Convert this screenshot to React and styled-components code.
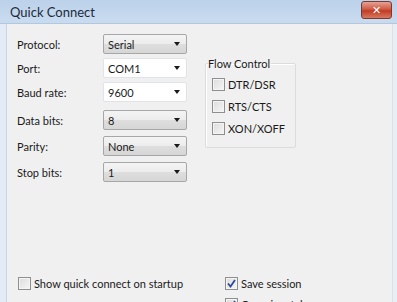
import React from 'react'
import styled, { createGlobalStyle } from 'styled-components'

const Global = createGlobalStyle`
  html, body { margin: 0; padding: 0; background: #f0f0f0; }
  body { font-family: Lato, "Noto Sans", sans-serif; }
`;

const Window = styled.div`
  width: 397px;
  height: 302px;
  display: flex;
  flex-direction: column;
  overflow: hidden;
  background: #f0f0f0;
`;

const TitleBar = styled.div`
  height: 23px;
  flex: none;
  display: flex;
  align-items: center;
  justify-content: space-between;
  padding: 0 5px 0 10px;
  background: linear-gradient(#bcd2ea, #c9dbef);
  border-bottom: 1px solid #b3c7dd;
  .title {
    font-size: 13px;
    color: #1c2b3c;
  }
`;

const CloseButton = styled.div`
  width: 29px;
  height: 16px;
  margin-top: -3px;
  border-radius: 3px;
  border: 1px solid #7a3a33;
  background: linear-gradient(#e6a293, #cf5a45 45%, #c23b25 55%, #d67a5f);
  display: flex;
  align-items: center;
  justify-content: center;
  color: #fff;
  font-size: 11px;
  font-weight: 700;
  font-family: "DejaVu Sans", sans-serif;
`;

const Frame = styled.div`
  flex: 1;
  display: flex;
  border-left: 6px solid #e3ecf6;
  border-right: 4px solid #e8eef5;
`;

const Body = styled.div`
  flex: 1;
  display: flex;
  flex-direction: column;
  border-left: 1px solid #c9d6e4;
  border-right: 1px solid #dbe2ea;
  padding: 10px 0 0 10px;
  font-size: 11px;
  color: #1a1a1a;
`;

const Top = styled.div`
  display: flex;
  align-items: flex-start;
`;

const Form = styled.div`
  display: flex;
  flex-direction: column;
  width: 180px;
`;

const Row = styled.div`
  display: flex;
  align-items: center;
  height: 20px;
  margin-top: ${p => p.$gap || 0}px;
`;

const Label = styled.span`
  width: 86px;
`;

const Select = styled.div`
  width: 84px;
  height: 20px;
  box-sizing: border-box;
  display: flex;
  align-items: center;
  justify-content: space-between;
  padding: 0 6px 0 4px;
  border-radius: 2px;
  border: 1px solid ${p => (p.$edit ? '#e0e3e8' : '#a7a7a7')};
  background: ${p => (p.$edit ? '#ffffff' : 'linear-gradient(#f4f4f4, #ececec 50%, #dedede 51%, #d6d6d6)')};
  &::after {
    content: '';
    border-left: 3.5px solid transparent;
    border-right: 3.5px solid transparent;
    border-top: 4px solid #1a1a1a;
  }
`;

const Group = styled.fieldset`
  margin: 23px 0 0 8px;
  padding: 8px 0 10px 6px;
  width: 91px;
  height: 91px;
  box-sizing: border-box;
  border: 1px solid #dcdcdc;
  border-radius: 2px;
  box-shadow: inset 1px 1px 0 #fff;
  display: flex;
  flex-direction: column;
  gap: 9px;
  legend {
    padding: 0 1px 0 0;
    margin-left: -4px;
    font-size: 11px;
    color: #1a1a1a;
  }
`;

const Check = styled.label`
  display: flex;
  align-items: center;
  gap: 3px;
  height: 13px;
`;

const Box = styled.span`
  width: 13px;
  height: 13px;
  flex: none;
  box-sizing: border-box;
  border: 1px solid #8f8f8f;
  background: linear-gradient(135deg, #dcdcdc, #f6f6f6);
  box-shadow: inset 0 0 0 1px #f4f4f4;
  display: flex;
  align-items: center;
  justify-content: center;
`;

const Bottom = styled.div`
  margin-top: auto;
  display: grid;
  grid-template-columns: 207px auto;
  row-gap: 8px;
  padding: 0 0 0 1px;
  margin-bottom: -9px;
`;

function CheckBox({ checked, children }) {
  return (
    <Check>
      <Box>
        {checked && (
          <svg width="9" height="9" viewBox="0 0 9 9">
            <path d="M1 4.5 L3.5 7.5 L8 1" fill="none" stroke="#2c4a9a" strokeWidth="1.8" />
          </svg>
        )}
      </Box>
      {children}
    </Check>
  );
}

export default function App() {
  return (
    <Window>
      <Global />
      <TitleBar>
        <span className="title">Quick Connect</span>
        <CloseButton>✕</CloseButton>
      </TitleBar>
      <Frame>
        <Body>
          <Top>
            <Form>
              <Row><Label>Protocol:</Label><Select>Serial</Select></Row>
              <Row $gap={4}><Label>Port:</Label><Select $edit>COM1</Select></Row>
              <Row $gap={4}><Label>Baud rate:</Label><Select $edit>9600</Select></Row>
              <Row $gap={8}><Label>Data bits:</Label><Select>8</Select></Row>
              <Row $gap={6}><Label>Parity:</Label><Select>None</Select></Row>
              <Row $gap={6}><Label>Stop bits:</Label><Select>1</Select></Row>
            </Form>
            <Group>
              <legend>Flow Control</legend>
              <CheckBox>DTR/DSR</CheckBox>
              <CheckBox>RTS/CTS</CheckBox>
              <CheckBox>XON/XOFF</CheckBox>
            </Group>
          </Top>
          <Bottom>
            <CheckBox>Show quick connect on startup</CheckBox>
            <CheckBox checked>Save session</CheckBox>
            <span />
            <CheckBox checked>Open in a tab</CheckBox>
          </Bottom>
        </Body>
      </Frame>
    </Window>
  )
}
